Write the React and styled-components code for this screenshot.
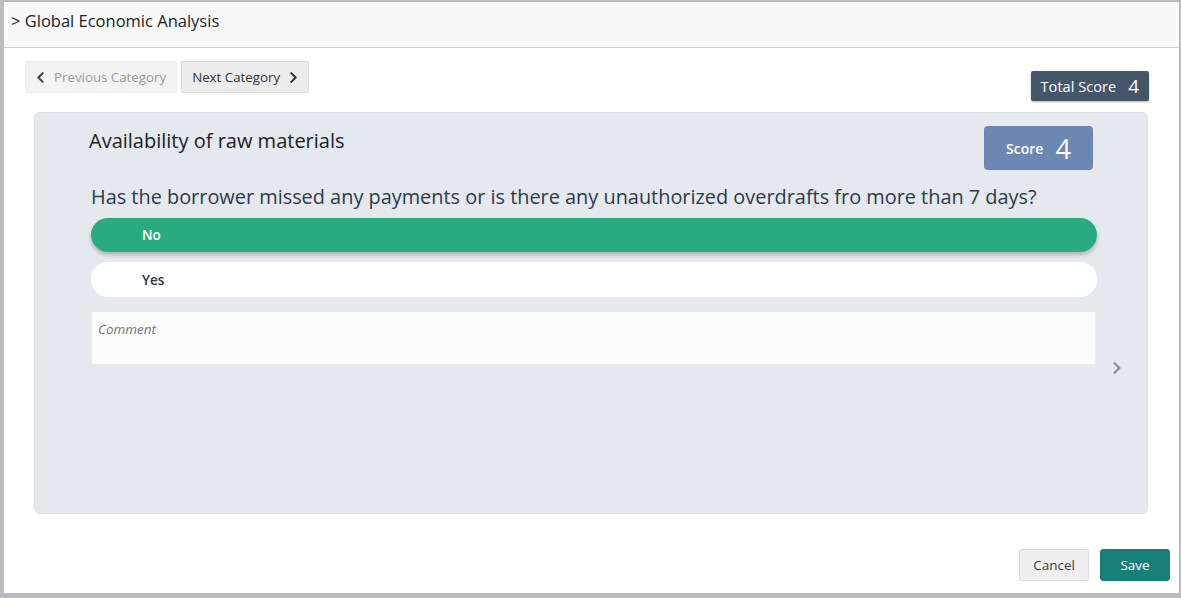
import React from 'react';
import styled, { createGlobalStyle } from 'styled-components';
import { FaChevronLeft, FaChevronRight } from 'react-icons/fa';

const GlobalStyle = createGlobalStyle`
  html, body {
    margin: 0;
    padding: 0;
    background: #ffffff;
    font-family: "Open Sans", "Noto Sans", sans-serif;
  }
`;

const Frame = styled.div`
  box-sizing: border-box;
  width: 1181px;
  height: 598px;
  border-style: solid;
  border-color: #bcbcbf;
  border-width: 2px 2px 5px 4px;
  background: #ffffff;
  display: flex;
  flex-direction: column;
`;

const Header = styled.div`
  box-sizing: border-box;
  height: 46px;
  background: #f9f9f9;
  border-bottom: 1px solid #cbcbcb;
  display: flex;
  align-items: center;
  padding: 0 0 8px 7px;
  font-size: 16.5px;
  color: #222;
`;

const Toolbar = styled.div`
  display: flex;
  align-items: flex-start;
  justify-content: space-between;
  margin-top: 13px;
  padding: 0 30px 0 21px;
`;

const NavGroup = styled.div`
  display: flex;
  gap: 4px;
`;

const NavButton = styled.button`
  box-sizing: border-box;
  height: 32px;
  display: flex;
  align-items: center;
  gap: 7px;
  padding: 0 ${(p) => (p.$next ? '8px 0 10px' : '10px 0 8px')};
  font-family: inherit;
  font-size: 13.3px;
  border: 1px solid ${(p) => (p.$next ? '#dcdcdc' : '#ececec')};
  background: ${(p) => (p.$next ? '#ebebeb' : '#f3f3f3')};
  color: ${(p) => (p.$next ? '#333' : '#9a9a9a')};
  border-radius: 1px;
  svg {
    color: ${(p) => (p.$next ? '#333' : '#444')};
    font-size: 13px;
  }
`;

const TotalScore = styled.div`
  margin-top: 10px;
  height: 30px;
  box-sizing: border-box;
  padding: 0 10px;
  display: flex;
  align-items: center;
  gap: 12px;
  background: #44576a;
  color: #fff;
  font-size: 14.6px;
  border-radius: 2px;
  box-shadow: 0 1px 2px rgba(0, 0, 0, 0.3);
  b {
    font-weight: 400;
    font-size: 19px;
  }
`;

const Panel = styled.div`
  position: relative;
  box-sizing: border-box;
  margin: 11px 31px 0 30px;
  height: 402px;
  background: #e5e8ed;
  border: 1px solid #dde0e5;
  border-radius: 6px;
  padding: 13px 50px 0 56px;
`;

const PanelHead = styled.div`
  display: flex;
  justify-content: space-between;
  align-items: flex-start;
`;

const Title = styled.div`
  margin-left: -2px;
  padding-top: 2px;
  line-height: 26px;
  font-size: 20px;
  color: #222;
`;

const ScoreBox = styled.div`
  margin-right: 4px;
  width: 109px;
  height: 44px;
  box-sizing: border-box;
  display: flex;
  align-items: center;
  justify-content: center;
  gap: 12px;
  background: #6d87b3;
  border-radius: 4px;
  color: #fff;
  font-size: 14px;
  font-weight: 600;
  b {
    font-size: 27px;
    font-weight: 400;
  }
`;

const Question = styled.div`
  margin-top: 14px;
  line-height: 26px;
  font-size: 19.9px;
  color: #2b3a4e;
`;

const Option = styled.div`
  box-sizing: border-box;
  margin-top: ${(p) => (p.$selected ? '8px' : '10px')};
  height: ${(p) => (p.$selected ? '34px' : '35px')};
  border-radius: 17px;
  display: flex;
  align-items: center;
  padding-left: 51px;
  font-size: 13.5px;
  font-weight: 600;
  background: ${(p) => (p.$selected ? '#2aaa80' : '#ffffff')};
  color: ${(p) => (p.$selected ? '#ffffff' : '#2b3444')};
  box-shadow: ${(p) => (p.$selected ? '0 3px 4px rgba(0, 0, 0, 0.22)' : 'none')};
`;

const Comment = styled.textarea`
  display: block;
  box-sizing: border-box;
  margin-top: 14px;
  width: calc(100% - 1px);
  height: 54px;
  resize: none;
  border: 1px solid #eceaea;
  background: #fcfbfb;
  padding: 8px 6px;
  font-family: inherit;
  font-size: 13.5px;
  outline: none;
  &::placeholder {
    font-style: italic;
    color: #737373;
  }
`;

const SlideArrow = styled.div`
  position: absolute;
  right: 23px;
  top: 248px;
  color: #8a8f96;
  font-size: 14px;
  display: flex;
`;

const Footer = styled.div`
  margin-top: auto;
  margin-bottom: 12px;
  display: flex;
  justify-content: flex-end;
  gap: 11px;
  padding-right: 9px;
`;

const ActionButton = styled.button`
  box-sizing: border-box;
  width: 70px;
  height: 32px;
  font-family: inherit;
  font-size: 13.5px;
  border-radius: 3px;
  border: 1px solid ${(p) => (p.$primary ? '#177e78' : '#d8d8d8')};
  background: ${(p) => (p.$primary ? '#177e78' : '#efefef')};
  color: ${(p) => (p.$primary ? '#ffffff' : '#3c3c3c')};
`;

export default function App() {
  return (
    <>
      <GlobalStyle />
      <Frame>
        <Header>&gt; Global Economic Analysis</Header>
        <Toolbar>
          <NavGroup>
            <NavButton>
              <FaChevronLeft />
              Previous Category
            </NavButton>
            <NavButton $next>
              Next Category
              <FaChevronRight />
            </NavButton>
          </NavGroup>
          <TotalScore>
            Total Score <b>4</b>
          </TotalScore>
        </Toolbar>
        <Panel>
          <PanelHead>
            <Title>Availability of raw materials</Title>
            <ScoreBox>
              Score <b>4</b>
            </ScoreBox>
          </PanelHead>
          <Question>
            Has the borrower missed any payments or is there any unauthorized overdrafts fro more than 7 days?
          </Question>
          <Option $selected>No</Option>
          <Option>Yes</Option>
          <Comment placeholder="Comment" />
          <SlideArrow>
            <FaChevronRight />
          </SlideArrow>
        </Panel>
        <Footer>
          <ActionButton>Cancel</ActionButton>
          <ActionButton $primary>Save</ActionButton>
        </Footer>
      </Frame>
    </>
  );
}
